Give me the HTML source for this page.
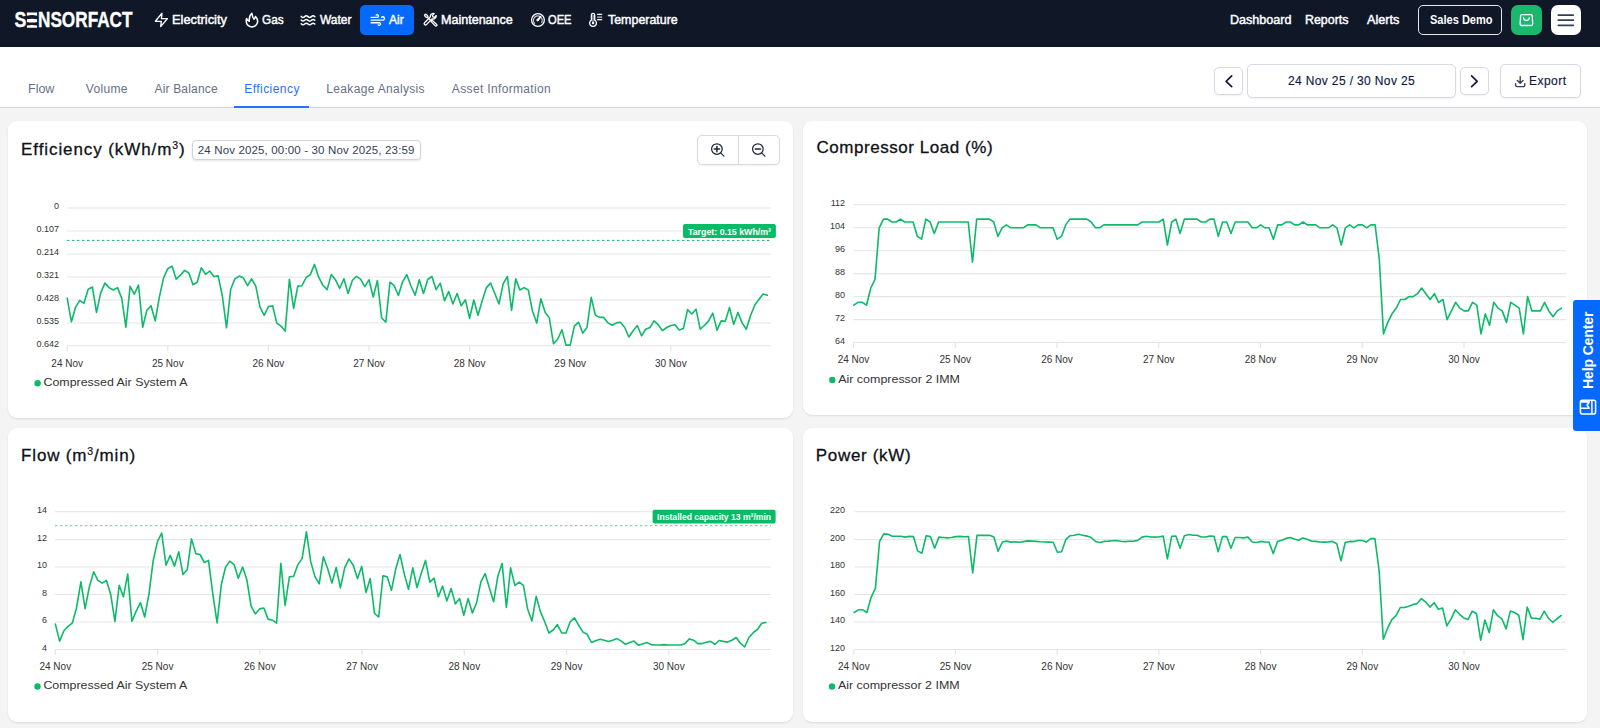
<!DOCTYPE html>
<html>
<head>
<meta charset="utf-8">
<title>Sensorfact - Air Efficiency</title>
<style>
*{box-sizing:border-box;margin:0;padding:0}
html,body{width:1600px;height:728px;overflow:hidden}
body{background:#f4f4f4;font-family:"Liberation Sans",sans-serif;position:relative;color:#101828}
.abs{position:absolute}
#nav{position:absolute;left:0;top:0;width:1600px;height:47px;background:#101828}
.ni{position:absolute;top:0.4px;height:40px;line-height:40px;color:#fff;font-size:13px;font-weight:400;white-space:nowrap;-webkit-text-stroke:0.45px #fff}
.ni.sd{font-size:12px;font-weight:700;-webkit-text-stroke:0}
.nic{position:absolute;width:14px;height:14px}
.nic svg{display:block;width:100%;height:100%;fill:none;stroke:#fff;stroke-width:2;stroke-linecap:round;stroke-linejoin:round;overflow:visible}
#airbtn{position:absolute;left:360.2px;top:4.9px;width:53.7px;height:30.1px;background:#0569fe;border-radius:5px}
#sub{position:absolute;left:0;top:47px;width:1600px;height:61px;background:#fff;border-bottom:1px solid #d3d8e3}
.tab{position:absolute;top:81.3px;height:16px;line-height:16px;font-size:12px;color:#667085;white-space:nowrap}
.tab.act{color:#2970ff}
.dt{position:absolute;top:63.6px;height:35px;line-height:35px;font-size:12px;color:#101840;-webkit-text-stroke:0.15px #101840;white-space:nowrap}
.bdg{position:absolute;top:139.5px;height:20.5px;line-height:20.5px;font-size:11.5px;color:#344054;white-space:nowrap}
.btn{position:absolute;background:#fff;border:1px solid #d5d9e6;border-radius:5px;box-shadow:0 1px 2px rgba(16,24,40,.06)}
.card{position:absolute;background:#fff;border-radius:9px;box-shadow:0 1px 2px rgba(0,0,0,.10)}
.ct{position:absolute;font-size:17px;line-height:20px;color:#0e1116;white-space:nowrap;-webkit-text-stroke:0.3px #0e1116}
.sp{font-size:10.5px;line-height:0;vertical-align:6.2px;-webkit-text-stroke:0.2px #0e1116}
svg.ch{position:absolute;left:0;top:0;width:1600px;height:728px;pointer-events:none}
svg.ch text{font-family:"Liberation Sans",sans-serif}
.yl{font-size:9px;fill:#333;text-anchor:end}
.xl{font-size:10px;fill:#333;text-anchor:middle}
.lg{font-size:11.4px;fill:#333}
.gl{stroke:#e5e5e5;stroke-width:1.05}
.ln{fill:none;stroke:#0dba69;stroke-width:1.6;stroke-linejoin:round;stroke-linecap:round}
</style>
</head>
<body>
<!-- NAVBAR -->
<div id="nav">
  <div id="airbtn"></div>
  <div class="abs" style="left:1418.2px;top:5px;width:83.8px;height:30px;border:1.5px solid #e4e7ec;border-radius:5px"></div>
  <div class="abs" style="left:1511px;top:4.9px;width:30.9px;height:30.2px;background:#1ab76c;border-radius:7px"></div>
  <div class="abs" style="left:1550.5px;top:4.9px;width:30.6px;height:30.2px;background:#fff;border-radius:7px"></div>
</div>
<!-- SUBHEADER -->
<div id="sub"></div>
<div class="abs" style="left:234.1px;top:106px;width:75.2px;height:2px;background:#2970ff"></div>
<div class="btn" style="left:1213.8px;top:67.3px;width:29.6px;height:28px"></div>
<div class="btn" style="left:1247.4px;top:63.6px;width:208.2px;height:34.9px"></div>
<div class="btn" style="left:1459.9px;top:67.3px;width:29.6px;height:28px"></div>
<div class="btn" style="left:1499.9px;top:63.6px;width:80.8px;height:34.9px"></div>
<!-- CARDS -->
<div class="card" style="left:8px;top:121.4px;width:785px;height:296.8px"></div>
<div class="card" style="left:803px;top:121.4px;width:784px;height:293.6px"></div>
<div class="card" style="left:8px;top:428px;width:785px;height:294px"></div>
<div class="card" style="left:803px;top:428px;width:784px;height:294px"></div>
<div class="btn" style="left:191.5px;top:139.5px;width:229px;height:20.5px;border-radius:4px;border-color:#d0d5dd;box-shadow:0 1px 2px rgba(16,24,40,.12)"></div>
<div class="btn" style="left:696.9px;top:135px;width:83.2px;height:29.6px;border-radius:5px"></div>
<div class="abs" style="left:738px;top:135px;width:1px;height:29.5px;background:#d5d9e6"></div>
<div id="n1" class="ni" style="left:171.77px;transform-origin:0 50%;transform:scaleX(0.9883);">Electricity</div>
<div id="n2" class="ni" style="left:262.38px;transform-origin:0 50%;transform:scaleX(0.9070);">Gas</div>
<div id="n3" class="ni" style="left:319.50px;transform-origin:0 50%;transform:scaleX(0.9213);">Water</div>
<div id="n4" class="ni" style="left:389.00px;transform-origin:0 50%;transform:scaleX(0.9246);">Air</div>
<div id="n5" class="ni" style="left:441.34px;transform-origin:0 50%;transform:scaleX(0.9643);">Maintenance</div>
<div id="n6" class="ni" style="left:548.13px;transform-origin:0 50%;transform:scaleX(0.8571);">OEE</div>
<div id="n7" class="ni" style="left:607.50px;transform-origin:0 50%;transform:scaleX(0.9556);">Temperature</div>
<div id="n8" class="ni" style="left:1229.88px;transform-origin:0 50%;transform:scaleX(0.9657);">Dashboard</div>
<div id="n9" class="ni" style="left:1305.40px;transform-origin:0 50%;transform:scaleX(0.9535);">Reports</div>
<div id="n10" class="ni" style="left:1367.00px;transform-origin:0 50%;transform:scaleX(0.9735);">Alerts</div>
<div id="n11" class="ni sd" style="left:1429.59px;transform-origin:0 50%;transform:scaleX(0.9194);">Sales Demo</div>
<div id="t1" class="tab" style="left:28.25px;transform-origin:0 50%;transform:scaleX(1.0420);">Flow</div>
<div id="t2" class="tab" style="left:85.86px;letter-spacing:0.297px;">Volume</div>
<div id="t3" class="tab" style="left:154.44px;letter-spacing:0.185px;">Air Balance</div>
<div id="t4" class="tab act" style="left:244.31px;letter-spacing:0.441px;">Efficiency</div>
<div id="t5" class="tab" style="left:326.31px;letter-spacing:0.327px;">Leakage Analysis</div>
<div id="t6" class="tab" style="left:451.87px;letter-spacing:0.345px;">Asset Information</div>
<div id="d1" class="dt" style="left:1287.95px;letter-spacing:0.367px;">24 Nov 25 / 30 Nov 25</div>
<div id="d2" class="dt" style="left:1529.00px;letter-spacing:0.471px;">Export</div>
<div id="b1" class="bdg" style="left:197.76px;letter-spacing:0.150px;">24 Nov 2025, 00:00 - 30 Nov 2025, 23:59</div>
<div id="c1t" class="ct" style="left:21.10px;letter-spacing:0.910px;top:139.8px">Efficiency (kWh/m<span class="sp">3</span>)</div>
<div id="c2t" class="ct" style="left:816.45px;letter-spacing:0.549px;top:137.9px">Compressor Load (%)</div>
<div id="c3t" class="ct" style="left:21.10px;letter-spacing:0.826px;top:445.6px">Flow (m<span class="sp">3</span>/min)</div>
<div id="c4t" class="ct" style="left:815.77px;letter-spacing:0.684px;top:445.6px">Power (kW)</div>
<svg class="ch" viewBox="0 0 1600 728" style="z-index:5">
<g fill="none" stroke="#fff" stroke-width="1.35" stroke-linecap="round" stroke-linejoin="round">
<!-- bolt -->
<path d="M162,13.3 L155.35,21.3 L161.35,21.3 L160.7,26.6 L167.4,18.6 L161.4,18.6 Z"/>
<!-- flame -->
<path stroke-width="1.5" d="M246.6,18.4 C247.2,20 248.3,21 249.3,21.3 C249,18 250,14.8 251.8,13.2 C252.2,15.8 252.8,18 254,19.3 C254.8,18.5 255.3,17.5 255.5,16.4 C257,18 257.8,20 257.6,21.8 C257.3,24.8 254.8,26.9 252,26.9 C249,26.9 246.3,24.6 246.2,21.5 C246.15,20.3 246.3,19.2 246.6,18.4 Z"/>
<!-- water -->
<g stroke-width="1.5">
<path d="M301.2,16.4 q1.7,1.9 3.4,0.2 t3.4,0 t3.4,0 t3.4,0"/>
<path d="M301.2,20.1 q1.7,1.9 3.4,0.2 t3.4,0 t3.4,0 t3.4,0"/>
<path d="M301.2,23.8 q1.7,1.9 3.4,0.2 t3.4,0 t3.4,0 t3.4,0"/>
</g>
<!-- wind (feather) 16px at 369.8,12.05 -->
<g transform="translate(369.8,12.05) scale(0.6667)" stroke-width="2">
<path d="M9.59 4.59A2 2 0 1 1 11 8H2m10.59 11.41A2 2 0 1 0 14 16H2m15.73-8.27A2.5 2.5 0 1 1 19.5 12H2"/>
</g>
<!-- tools: wrench + screwdriver -->
<g stroke-width="1.4" transform="translate(431 19.9) scale(0.93) translate(-431 -19.75)">
<path d="M432.3,18.6 L426.1,24.8 a1.45,1.45 0 0 1 -2.05,-2.05 L430.2,16.6 a3.3,3.3 0 0 1 4.3,-3.6 l-1.9,1.9 l0.4,1.7 l1.7,0.4 l1.9,-1.9 a3.3,3.3 0 0 1 -4.3,3.5 z"/>
<path d="M425.1,13.6 l1.6,0.9 l1.1,2 l-0.9,0.9 l-2,-1.1 l-0.9,-1.6 z"/>
<path d="M427.6,17.3 L431.2,20.9"/>
<path d="M431,21.3 l1.2,-1.2 l4.9,4.6 a1,1 0 0 1 -1.5,1.5 z"/>
</g>
<!-- gauge -->
<circle cx="537.95" cy="19.95" r="6.4" stroke-width="1.3"/>
<path d="M534.6,23.3 A4.4,4.4 0 1 1 541.7,22.4" stroke="#c3c8d3" stroke-width="1.2" stroke-dasharray="2.2 0.7"/>
<path d="M537.8,20.1 L540.4,16.9" stroke-width="2"/>
<circle cx="537.75" cy="20.05" r="1.3" fill="#fff" stroke="none"/>
<!-- thermometer -->
<path d="M591.4,15.1 a1.65,1.65 0 0 1 3.3,0 v5.0 a3.4,3.4 0 1 1 -3.3,0 z" stroke-width="1.3"/>
<path d="M593.05,15.6 V21.6" stroke="#9aa1b1" stroke-width="1.5"/>
<circle cx="593.05" cy="23.1" r="1.25" fill="#fff" stroke="none"/>
<path d="M597.6,14.3 H601.7" stroke-width="1.3"/>
<path d="M597.6,17.1 H601.7" stroke="#c9cdd6" stroke-width="1.3"/>
<path d="M597.6,19.6 H601.7" stroke-width="1.3"/>
<!-- bag -->
<path d="M1521.8,14.6 h9.2 a1.2,1.2 0 0 1 1.2,1.1 l0.5,8.4 a1.4,1.4 0 0 1 -1.4,1.4 h-9.8 a1.4,1.4 0 0 1 -1.4,-1.4 l0.5,-8.4 a1.2,1.2 0 0 1 1.2,-1.1 z" stroke-width="1.3"/>
<path d="M1523.5,17.6 a2.9,2.9 0 0 0 5.8,0" stroke-width="1.3"/>
</g>
<!-- logo -->
<g fill="#fff" stroke="#fff" stroke-width="0.35" font-family="Liberation Sans" font-weight="700" font-size="21.3">
<text x="14.6" y="27.3" textLength="11.8" lengthAdjust="spacingAndGlyphs">S</text>
<text x="38" y="27.3" textLength="94.5" lengthAdjust="spacingAndGlyphs">NSORFACT</text>
</g>
<g fill="#fff" stroke="none">
<path d="M26.9,12.5 H37.1 V15.7 Q32,14.5 26.9,15.7 Z"/>
<path d="M26.9,19.2 Q32,18.1 37.1,19.2 V21.9 Q32,23 26.9,21.9 Z"/>
<path d="M26.9,25.6 Q32,24.3 37.1,25.6 V27.7 H26.9 Z"/>
</g>
<!-- hamburger -->
<g stroke="#344054" stroke-width="1.7" stroke-linecap="round">
<path d="M1558.3,15.1 H1573.3 M1558.3,20.2 H1573.3 M1558.3,25.3 H1573.3"/>
</g>
<!-- chevrons, export, zoom -->
<g fill="none" stroke="#101840" stroke-width="1.7" stroke-linecap="round" stroke-linejoin="round">
<path d="M1231.7,75.9 L1226.1,81.3 L1231.7,86.7"/>
<path d="M1471.6,75.9 L1477.2,81.3 L1471.6,86.7"/>
</g>
<g fill="none" stroke="#344054" stroke-width="1.4" stroke-linecap="round" stroke-linejoin="round">
<path d="M1515.6,83.6 v1.4 a1.6,1.6 0 0 0 1.6,1.6 h6 a1.6,1.6 0 0 0 1.6,-1.6 v-1.4"/>
<path d="M1520.2,76.6 V83 M1517.3,80.4 L1520.2,83.3 L1523.1,80.4"/>
</g>
<g fill="none" stroke="#1d2939" stroke-width="1.25" stroke-linecap="round">
<circle cx="716.9" cy="149.05" r="5.3"/>
<path d="M720.9,153.1 L724,156.1"/>
<path d="M714.3,149.05 H719.5 M716.9,146.45 V151.65" stroke-width="1.5"/>
<circle cx="757.85" cy="149.05" r="5.3"/>
<path d="M761.85,153.1 L764.95,156.1"/>
<path d="M755.25,149.05 H760.45" stroke-width="1.5"/>
</g>
</svg>
<!-- HELP CENTER -->
<div class="abs" style="left:1573.4px;top:299.8px;width:26.6px;height:130.8px;background:#0569fe;border-radius:3px 0 0 3px;z-index:6"></div>
<div id="hc" class="abs" style="left:1592.8px;top:389.3px;transform-origin:0 0;transform:rotate(-90deg);font-size:14px;font-weight:700;color:#fff;line-height:14px;height:14px;white-space:nowrap;z-index:7;letter-spacing:-0.12px"><span style="position:relative;top:-12.1px">Help Center</span></div>
<svg class="ch" viewBox="0 0 1600 728" style="z-index:8">
<g fill="none" stroke="#fff" stroke-width="1.5" stroke-linejoin="round">
<rect x="1580.4" y="400.3" width="15.2" height="13.6" rx="1.8"/>
<path d="M1591.9,400.5 V413.7"/>
<path d="M1581,401.9 H1589.2 L1587.2,405 L1589.2,408.3 H1581" stroke-width="1.6"/>
</g>
</svg>
<!-- CHARTS -->
<svg class="ch" viewBox="0 0 1600 728">
<g id="c1">
<line class="gl" x1="67" x2="771" y1="208.0" y2="208.0"/>
<text class="yl" x="59" y="209.3">0</text>
<line class="gl" x1="67" x2="771" y1="231.0" y2="231.0"/>
<text class="yl" x="59" y="232.3">0.107</text>
<line class="gl" x1="67" x2="771" y1="253.9" y2="253.9"/>
<text class="yl" x="59" y="255.2">0.214</text>
<line class="gl" x1="67" x2="771" y1="276.9" y2="276.9"/>
<text class="yl" x="59" y="278.2">0.321</text>
<line class="gl" x1="67" x2="771" y1="299.9" y2="299.9"/>
<text class="yl" x="59" y="301.2">0.428</text>
<line class="gl" x1="67" x2="771" y1="322.9" y2="322.9"/>
<text class="yl" x="59" y="324.2">0.535</text>
<line class="gl" x1="67" x2="771" y1="345.8" y2="345.8"/>
<text class="yl" x="59" y="347.1">0.642</text>
<line class="gl" x1="67.2" x2="67.2" y1="345.8" y2="351.3" style="stroke-width:1.2"/>
<text class="xl" x="67.2" y="366.5">24 Nov</text>
<line class="gl" x1="167.8" x2="167.8" y1="345.8" y2="351.3" style="stroke-width:1.2"/>
<text class="xl" x="167.8" y="366.5">25 Nov</text>
<line class="gl" x1="268.4" x2="268.4" y1="345.8" y2="351.3" style="stroke-width:1.2"/>
<text class="xl" x="268.4" y="366.5">26 Nov</text>
<line class="gl" x1="368.99999999999994" x2="368.99999999999994" y1="345.8" y2="351.3" style="stroke-width:1.2"/>
<text class="xl" x="368.99999999999994" y="366.5">27 Nov</text>
<line class="gl" x1="469.59999999999997" x2="469.59999999999997" y1="345.8" y2="351.3" style="stroke-width:1.2"/>
<text class="xl" x="469.59999999999997" y="366.5">28 Nov</text>
<line class="gl" x1="570.2" x2="570.2" y1="345.8" y2="351.3" style="stroke-width:1.2"/>
<text class="xl" x="570.2" y="366.5">29 Nov</text>
<line class="gl" x1="670.8" x2="670.8" y1="345.8" y2="351.3" style="stroke-width:1.2"/>
<text class="xl" x="670.8" y="366.5">30 Nov</text>
<line x1="67" x2="771" y1="240.4" y2="240.4" stroke="#0dba69" stroke-width="1" stroke-dasharray="2.4 2.6"/><rect x="683" y="224.1" width="92.9" height="13.9" rx="2" fill="#08bc67"/><text x="729.5" y="234.6" text-anchor="middle" fill="#fff" font-size="9" font-weight="700" textLength="83" lengthAdjust="spacingAndGlyphs">Target: 0.15 kWh/m³</text>
<polyline class="ln" points="67.2,298.1 71.4,321.8 75.6,307.2 79.8,300.4 84.0,303.3 88.2,289.2 92.4,287.0 96.5,312.4 100.7,292.9 104.9,283.1 109.1,287.6 113.3,290.0 117.5,287.6 121.7,298.1 125.9,327.2 130.1,286.3 134.3,294.2 138.5,285.0 142.7,327.2 146.8,310.5 151.0,305.7 155.2,320.9 159.4,296.8 163.6,277.8 167.8,268.7 172.0,266.1 176.2,279.2 180.4,275.2 184.6,270.4 188.8,273.0 193.0,284.8 197.2,282.2 201.3,267.8 205.5,274.3 209.7,271.1 213.9,276.5 218.1,275.9 222.3,295.5 226.5,327.8 230.7,289.2 234.9,278.8 239.1,276.1 243.3,277.8 247.5,285.7 251.6,278.8 255.8,286.1 260.0,307.2 264.2,315.3 268.4,306.6 272.6,305.7 276.8,323.1 281.0,326.1 285.2,331.1 289.4,279.2 293.6,308.5 297.8,286.1 302.0,285.7 306.1,277.5 310.3,274.6 314.5,264.4 318.7,277.2 322.9,285.3 327.1,289.6 331.3,274.6 335.5,279.8 339.7,288.3 343.9,278.8 348.1,293.5 352.3,280.5 356.4,276.3 360.6,279.2 364.8,286.7 369.0,279.8 373.2,297.0 377.4,280.5 381.6,317.7 385.8,322.2 390.0,282.2 394.2,285.7 398.4,295.5 402.6,281.8 406.8,274.6 410.9,285.7 415.1,295.2 419.3,279.8 423.5,293.5 427.7,279.5 431.9,276.5 436.1,289.6 440.3,283.1 444.5,300.7 448.7,291.6 452.9,304.0 457.1,293.5 461.2,305.7 465.4,299.8 469.6,318.3 473.8,300.0 478.0,315.3 482.2,300.7 486.4,287.6 490.6,283.1 494.8,293.5 499.0,304.0 503.2,283.7 507.4,276.5 511.6,310.5 515.7,278.8 519.9,290.0 524.1,287.6 528.3,290.0 532.5,311.1 536.7,323.1 540.9,298.7 545.1,312.2 549.3,317.9 553.5,343.8 557.7,339.2 561.9,329.7 566.0,345.1 570.2,345.1 574.4,326.1 578.6,322.2 582.8,333.1 587.0,327.5 591.2,297.4 595.4,315.3 599.6,317.4 603.8,317.4 608.0,322.9 612.2,325.2 616.4,322.9 620.5,322.2 624.7,327.5 628.9,337.0 633.1,330.7 637.3,325.5 641.5,335.7 645.7,329.2 649.9,327.5 654.1,320.9 658.3,324.8 662.5,330.7 666.7,327.5 670.8,325.5 675.0,324.8 679.2,330.1 683.4,328.4 687.6,309.6 691.8,314.0 696.0,309.2 700.2,329.2 704.4,325.5 708.6,320.9 712.8,313.1 717.0,330.1 721.2,320.9 725.3,321.3 729.5,307.6 733.7,324.2 737.9,312.4 742.1,322.9 746.3,329.2 750.5,315.7 754.7,305.3 758.9,299.4 763.1,293.9 767.3,295.2"/>
<circle cx="37.6" cy="383.3" r="3.2" fill="#0dba69"/>
<text class="lg" x="43.5" y="386.2" textLength="144" lengthAdjust="spacingAndGlyphs">Compressed Air System A</text>
</g>
<g id="c2">
<line class="gl" x1="853.5" x2="1566" y1="204.8" y2="204.8"/>
<text class="yl" x="845" y="206.1">112</text>
<line class="gl" x1="853.5" x2="1566" y1="227.8" y2="227.8"/>
<text class="yl" x="845" y="229.1">104</text>
<line class="gl" x1="853.5" x2="1566" y1="250.7" y2="250.7"/>
<text class="yl" x="845" y="252.0">96</text>
<line class="gl" x1="853.5" x2="1566" y1="273.6" y2="273.6"/>
<text class="yl" x="845" y="274.9">88</text>
<line class="gl" x1="853.5" x2="1566" y1="296.6" y2="296.6"/>
<text class="yl" x="845" y="297.9">80</text>
<line class="gl" x1="853.5" x2="1566" y1="319.6" y2="319.6"/>
<text class="yl" x="845" y="320.9">72</text>
<line class="gl" x1="853.5" x2="1566" y1="342.5" y2="342.5"/>
<text class="yl" x="845" y="343.8">64</text>
<line class="gl" x1="853.5" x2="853.5" y1="342.5" y2="348.0" style="stroke-width:1.2"/>
<text class="xl" x="853.5" y="362.5">24 Nov</text>
<line class="gl" x1="955.25" x2="955.25" y1="342.5" y2="348.0" style="stroke-width:1.2"/>
<text class="xl" x="955.25" y="362.5">25 Nov</text>
<line class="gl" x1="1057.0" x2="1057.0" y1="342.5" y2="348.0" style="stroke-width:1.2"/>
<text class="xl" x="1057.0" y="362.5">26 Nov</text>
<line class="gl" x1="1158.75" x2="1158.75" y1="342.5" y2="348.0" style="stroke-width:1.2"/>
<text class="xl" x="1158.75" y="362.5">27 Nov</text>
<line class="gl" x1="1260.5" x2="1260.5" y1="342.5" y2="348.0" style="stroke-width:1.2"/>
<text class="xl" x="1260.5" y="362.5">28 Nov</text>
<line class="gl" x1="1362.25" x2="1362.25" y1="342.5" y2="348.0" style="stroke-width:1.2"/>
<text class="xl" x="1362.25" y="362.5">29 Nov</text>
<line class="gl" x1="1464.0" x2="1464.0" y1="342.5" y2="348.0" style="stroke-width:1.2"/>
<text class="xl" x="1464.0" y="362.5">30 Nov</text>

<polyline class="ln" points="853.8,305.2 858.0,302.3 862.3,302.3 866.5,305.2 870.8,288.0 875.0,279.4 879.2,227.8 883.5,219.1 887.7,219.1 891.9,222.0 896.2,222.0 900.4,219.1 904.7,222.0 908.9,222.0 913.1,222.0 917.4,236.4 921.6,239.2 925.8,219.1 930.1,222.0 934.3,233.5 938.6,222.0 942.8,222.0 947.0,222.0 951.3,222.0 955.5,222.0 959.8,222.0 964.0,222.0 968.2,222.0 972.5,262.2 976.7,219.1 980.9,219.1 985.2,219.1 989.4,219.1 993.7,222.0 997.9,236.4 1002.1,227.8 1006.4,224.9 1010.6,227.8 1014.8,227.8 1019.1,227.8 1023.3,227.8 1027.6,224.9 1031.8,224.9 1036.0,224.9 1040.3,227.8 1044.5,227.8 1048.7,227.8 1053.0,227.8 1057.2,239.2 1061.5,236.4 1065.7,224.9 1069.9,219.1 1074.2,219.1 1078.4,219.1 1082.7,219.1 1086.9,219.1 1091.1,222.0 1095.4,227.8 1099.6,227.8 1103.8,224.9 1108.1,224.9 1112.3,224.9 1116.6,224.9 1120.8,224.9 1125.0,224.9 1129.3,224.9 1133.5,224.9 1137.7,224.9 1142.0,222.0 1146.2,222.0 1150.5,222.0 1154.7,222.0 1158.9,222.0 1163.2,219.1 1167.4,245.0 1171.7,222.0 1175.9,219.1 1180.1,233.5 1184.4,219.1 1188.6,219.1 1192.8,219.1 1197.1,219.1 1201.3,222.0 1205.6,222.0 1209.8,219.1 1214.0,219.1 1218.3,236.4 1222.5,222.0 1226.7,222.0 1231.0,233.5 1235.2,222.0 1239.5,222.0 1243.7,222.0 1247.9,222.0 1252.2,227.8 1256.4,227.8 1260.6,224.9 1264.9,227.8 1269.1,227.8 1273.4,239.2 1277.6,224.9 1281.8,224.9 1286.1,222.0 1290.3,222.0 1294.6,224.9 1298.8,224.9 1303.0,222.0 1307.3,224.9 1311.5,224.9 1315.7,224.9 1320.0,227.8 1324.2,227.8 1328.5,227.8 1332.7,224.9 1336.9,227.8 1341.2,245.0 1345.4,227.8 1349.6,224.9 1353.9,227.8 1358.1,224.9 1362.4,224.9 1366.6,227.8 1370.8,224.9 1375.1,224.9 1379.3,259.3 1383.5,333.9 1387.8,322.4 1392.0,313.8 1396.3,308.1 1400.5,299.5 1404.7,299.5 1409.0,296.6 1413.2,296.6 1417.5,293.7 1421.7,288.0 1425.9,293.7 1430.2,299.5 1434.4,293.7 1438.6,302.3 1442.9,299.5 1447.1,319.6 1451.4,310.9 1455.6,302.3 1459.8,308.1 1464.1,310.9 1468.3,310.9 1472.5,302.3 1476.8,305.2 1481.0,333.9 1485.3,313.8 1489.5,325.3 1493.7,302.3 1498.0,308.1 1502.2,310.9 1506.5,322.4 1510.7,302.3 1514.9,305.2 1519.2,308.1 1523.4,333.9 1527.6,296.6 1531.9,310.9 1536.1,310.9 1540.4,310.9 1544.6,302.3 1548.8,310.9 1553.1,316.7 1557.3,310.9 1561.5,308.1"/>
<circle cx="832.3" cy="379.9" r="3.2" fill="#0dba69"/>
<text class="lg" x="838.2" y="382.8" textLength="121.8" lengthAdjust="spacingAndGlyphs">Air compressor 2 IMM</text>
</g>
<g id="c3">
<line class="gl" x1="55" x2="771" y1="511.8" y2="511.8"/>
<text class="yl" x="47" y="513.1">14</text>
<line class="gl" x1="55" x2="771" y1="539.4" y2="539.4"/>
<text class="yl" x="47" y="540.7">12</text>
<line class="gl" x1="55" x2="771" y1="566.9" y2="566.9"/>
<text class="yl" x="47" y="568.2">10</text>
<line class="gl" x1="55" x2="771" y1="594.5" y2="594.5"/>
<text class="yl" x="47" y="595.8">8</text>
<line class="gl" x1="55" x2="771" y1="622.0" y2="622.0"/>
<text class="yl" x="47" y="623.3">6</text>
<line class="gl" x1="55" x2="771" y1="649.5" y2="649.5"/>
<text class="yl" x="47" y="650.8">4</text>
<line class="gl" x1="55.3" x2="55.3" y1="649.5" y2="655.0" style="stroke-width:1.2"/>
<text class="xl" x="55.3" y="669.5">24 Nov</text>
<line class="gl" x1="157.55" x2="157.55" y1="649.5" y2="655.0" style="stroke-width:1.2"/>
<text class="xl" x="157.55" y="669.5">25 Nov</text>
<line class="gl" x1="259.8" x2="259.8" y1="649.5" y2="655.0" style="stroke-width:1.2"/>
<text class="xl" x="259.8" y="669.5">26 Nov</text>
<line class="gl" x1="362.05" x2="362.05" y1="649.5" y2="655.0" style="stroke-width:1.2"/>
<text class="xl" x="362.05" y="669.5">27 Nov</text>
<line class="gl" x1="464.3" x2="464.3" y1="649.5" y2="655.0" style="stroke-width:1.2"/>
<text class="xl" x="464.3" y="669.5">28 Nov</text>
<line class="gl" x1="566.55" x2="566.55" y1="649.5" y2="655.0" style="stroke-width:1.2"/>
<text class="xl" x="566.55" y="669.5">29 Nov</text>
<line class="gl" x1="668.8" x2="668.8" y1="649.5" y2="655.0" style="stroke-width:1.2"/>
<text class="xl" x="668.8" y="669.5">30 Nov</text>
<line x1="55" x2="771" y1="525.7" y2="525.7" stroke="#7fd6ad" stroke-width="1.2" stroke-dasharray="2.4 2.6"/><rect x="652.6" y="509.8" width="123" height="13.7" rx="2" fill="#08bc67"/><text x="714.1" y="520.3" text-anchor="middle" fill="#fff" font-size="9" font-weight="700" textLength="114" lengthAdjust="spacingAndGlyphs">Installed capacity 13 m³/min</text>
<polyline class="ln" points="55.4,624.1 59.6,641.1 63.9,630.7 68.1,626.4 72.4,622.9 76.6,607.5 80.9,581.8 85.1,608.6 89.4,586.6 93.7,571.8 97.9,580.4 102.2,583.2 106.4,580.4 110.7,594.3 114.9,621.4 119.2,585.4 123.4,596.8 127.7,574.1 131.9,621.4 136.2,611.1 140.5,602.7 144.7,617.0 149.0,593.8 153.2,560.7 157.5,541.4 161.7,533.0 166.0,565.2 170.2,555.4 174.5,566.1 178.8,551.8 183.0,574.6 187.3,569.6 191.5,538.9 195.8,553.6 200.0,554.5 204.3,562.5 208.5,560.4 212.8,593.8 217.1,622.9 221.3,584.8 225.6,567.0 229.8,561.1 234.1,564.6 238.3,578.2 242.6,567.0 246.8,579.5 251.1,606.2 255.3,613.9 259.6,608.9 263.9,608.0 268.1,619.1 272.4,620.2 276.6,623.2 280.9,563.4 285.1,605.4 289.4,576.8 293.6,576.4 297.9,564.6 302.1,558.6 306.4,531.8 310.7,561.6 314.9,576.4 319.2,583.9 323.4,556.8 327.7,568.8 331.9,583.0 336.2,567.5 340.4,587.9 344.7,567.9 349.0,558.9 353.2,565.2 357.5,578.6 361.7,566.4 366.0,592.5 370.2,578.6 374.5,613.4 378.7,617.0 383.0,575.9 387.2,576.8 391.5,590.2 395.8,568.8 400.0,554.5 404.3,574.1 408.5,589.3 412.8,567.9 417.0,587.5 421.3,573.2 425.5,560.4 429.8,582.1 434.1,578.2 438.3,596.8 442.6,586.1 446.8,600.9 451.1,588.4 455.3,603.9 459.6,598.6 463.8,615.2 468.1,598.6 472.4,612.9 476.6,602.7 480.9,581.8 485.1,573.6 489.4,587.9 493.6,601.8 497.9,575.9 502.1,563.4 506.4,607.5 510.6,567.9 514.9,585.4 519.2,582.1 523.4,585.4 527.7,609.3 531.9,621.1 536.2,596.4 540.4,611.6 544.7,621.8 548.9,633.0 553.2,630.0 557.4,624.6 561.7,633.0 566.0,633.0 570.2,621.8 574.5,617.9 578.7,625.4 583.0,632.1 587.2,634.3 591.5,642.5 595.7,640.7 600.0,639.3 604.3,640.2 608.5,641.4 612.8,640.2 617.0,638.6 621.3,641.1 625.5,644.3 629.8,642.5 634.0,641.1 638.3,645.2 642.5,643.9 646.8,642.5 651.1,644.6 655.3,645.0 659.6,645.0 663.8,644.6 668.1,645.0 672.3,645.0 676.6,645.0 680.8,645.0 685.1,643.4 689.4,638.9 693.6,640.2 697.9,643.6 702.1,643.6 706.4,642.3 710.6,641.4 714.9,644.3 719.1,640.5 723.4,641.4 727.6,642.1 731.9,640.2 736.2,637.5 740.4,643.2 744.7,647.0 748.9,637.5 753.2,632.7 757.4,629.5 761.7,623.2 765.9,622.5"/>
<circle cx="37.5" cy="686.5" r="3.2" fill="#0dba69"/>
<text class="lg" x="43.4" y="689.4" textLength="144" lengthAdjust="spacingAndGlyphs">Compressed Air System A</text>
</g>
<g id="c4">
<line class="gl" x1="854.2" x2="1566" y1="511.8" y2="511.8"/>
<text class="yl" x="845" y="513.1">220</text>
<line class="gl" x1="854.2" x2="1566" y1="539.4" y2="539.4"/>
<text class="yl" x="845" y="540.7">200</text>
<line class="gl" x1="854.2" x2="1566" y1="566.9" y2="566.9"/>
<text class="yl" x="845" y="568.2">180</text>
<line class="gl" x1="854.2" x2="1566" y1="594.5" y2="594.5"/>
<text class="yl" x="845" y="595.8">160</text>
<line class="gl" x1="854.2" x2="1566" y1="622.0" y2="622.0"/>
<text class="yl" x="845" y="623.3">140</text>
<line class="gl" x1="854.2" x2="1566" y1="649.5" y2="649.5"/>
<text class="yl" x="845" y="650.8">120</text>
<line class="gl" x1="853.8" x2="853.8" y1="649.5" y2="655.0" style="stroke-width:1.2"/>
<text class="xl" x="853.8" y="669.5">24 Nov</text>
<line class="gl" x1="955.5" x2="955.5" y1="649.5" y2="655.0" style="stroke-width:1.2"/>
<text class="xl" x="955.5" y="669.5">25 Nov</text>
<line class="gl" x1="1057.2" x2="1057.2" y1="649.5" y2="655.0" style="stroke-width:1.2"/>
<text class="xl" x="1057.2" y="669.5">26 Nov</text>
<line class="gl" x1="1158.9" x2="1158.9" y1="649.5" y2="655.0" style="stroke-width:1.2"/>
<text class="xl" x="1158.9" y="669.5">27 Nov</text>
<line class="gl" x1="1260.6" x2="1260.6" y1="649.5" y2="655.0" style="stroke-width:1.2"/>
<text class="xl" x="1260.6" y="669.5">28 Nov</text>
<line class="gl" x1="1362.3" x2="1362.3" y1="649.5" y2="655.0" style="stroke-width:1.2"/>
<text class="xl" x="1362.3" y="669.5">29 Nov</text>
<line class="gl" x1="1464.0" x2="1464.0" y1="649.5" y2="655.0" style="stroke-width:1.2"/>
<text class="xl" x="1464.0" y="669.5">30 Nov</text>

<polyline class="ln" points="854.2,612.5 858.4,609.8 862.7,609.8 866.9,612.5 871.1,597.3 875.4,588.4 879.6,541.4 883.8,533.9 888.1,534.3 892.3,536.2 896.5,536.2 900.8,536.2 905.0,537.1 909.2,536.4 913.5,536.6 917.7,550.9 921.9,553.2 926.2,535.7 930.4,536.6 934.6,548.2 938.9,537.1 943.1,537.5 947.3,537.9 951.6,537.5 955.8,536.6 960.0,536.4 964.3,536.8 968.5,536.6 972.7,572.9 977.0,535.4 981.2,535.4 985.4,535.4 989.7,535.2 993.9,537.1 998.1,551.2 1002.4,542.0 1006.6,541.1 1010.8,542.1 1015.1,541.8 1019.3,542.3 1023.5,541.6 1027.8,540.9 1032.0,541.1 1036.2,541.4 1040.5,541.8 1044.7,542.0 1048.9,542.1 1053.2,542.3 1057.4,552.3 1061.6,551.8 1065.8,539.6 1070.1,535.7 1074.3,535.2 1078.5,534.3 1082.8,535.2 1087.0,536.1 1091.2,537.5 1095.5,541.4 1099.7,542.5 1103.9,541.4 1108.2,541.1 1112.4,540.7 1116.6,540.5 1120.9,541.2 1125.1,541.6 1129.3,541.2 1133.6,541.2 1137.8,540.4 1142.0,537.1 1146.3,536.2 1150.5,537.0 1154.7,537.1 1159.0,537.0 1163.2,536.1 1167.4,558.9 1171.7,536.2 1175.9,536.1 1180.1,548.2 1184.4,535.7 1188.6,534.5 1192.8,535.2 1197.1,535.2 1201.3,537.0 1205.5,537.0 1209.8,536.1 1214.0,536.2 1218.2,551.8 1222.5,536.6 1226.7,536.6 1230.9,548.2 1235.2,537.5 1239.4,537.5 1243.6,537.9 1247.9,537.1 1252.1,542.0 1256.3,542.5 1260.6,541.4 1264.8,542.0 1269.0,542.0 1273.3,553.6 1277.5,541.4 1281.7,540.2 1286.0,538.4 1290.2,537.5 1294.4,538.9 1298.7,540.2 1302.9,537.9 1307.1,539.3 1311.4,541.1 1315.6,541.4 1319.8,542.0 1324.1,542.1 1328.3,542.0 1332.5,541.4 1336.8,543.8 1341.0,560.7 1345.2,542.5 1349.5,541.4 1353.7,541.6 1357.9,540.5 1362.2,540.5 1366.4,542.1 1370.6,538.6 1374.9,538.6 1379.1,570.5 1383.3,639.3 1387.6,628.2 1391.8,619.6 1396.0,615.7 1400.3,607.5 1404.5,607.5 1408.7,606.2 1413.0,604.5 1417.2,603.6 1421.4,598.6 1425.7,602.1 1429.9,607.1 1434.1,602.7 1438.4,609.3 1442.6,608.0 1446.8,625.9 1451.1,618.8 1455.3,609.8 1459.5,614.3 1463.8,617.9 1468.0,619.6 1472.2,611.2 1476.5,613.8 1480.7,640.2 1484.9,620.0 1489.2,632.5 1493.4,609.8 1497.6,615.7 1501.8,618.8 1506.1,628.9 1510.3,611.1 1514.5,612.5 1518.8,615.2 1523.0,639.6 1527.2,607.1 1531.5,618.2 1535.7,618.2 1539.9,619.3 1544.2,611.1 1548.4,618.2 1552.6,622.3 1556.9,618.8 1561.1,615.5"/>
<circle cx="832" cy="686.5" r="3.2" fill="#0dba69"/>
<text class="lg" x="837.9" y="689.4" textLength="121.8" lengthAdjust="spacingAndGlyphs">Air compressor 2 IMM</text>
</g>
</svg>
</body>
</html>
